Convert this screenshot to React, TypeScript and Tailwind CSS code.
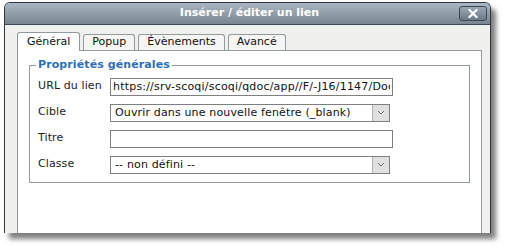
import React from 'react';

const FONT = { fontFamily: '"DejaVu Sans", Verdana, sans-serif' };

const TABS = [
  { label: 'Général', active: true },
  { label: 'Popup', active: false },
  { label: 'Évènements', active: false },
  { label: 'Avancé', active: false },
];

function Chevron() {
  return (
    <svg width="8" height="5" viewBox="0 0 8 5" className="block">
      <path d="M1 1 L4 4 L7 1" fill="none" stroke="#707070" strokeWidth="1" />
    </svg>
  );
}

function FakeSelect({ value }: { value: string }) {
  return (
    <div className="flex h-[18px] w-[280px] items-stretch border border-[#7f7f7f] bg-white">
      <div className="flex-1 overflow-hidden whitespace-nowrap pl-[4px] text-[11px] leading-[16px] tracking-[0.15px] text-[#111]">{value}</div>
      <div className="flex w-[17px] items-center justify-center border-l border-[#b0b0b0] bg-[#e0e0e0]">
        <Chevron />
      </div>
    </div>
  );
}

function Row({ label, children }: { label: string; children: React.ReactNode }) {
  return (
    <div className="flex h-[26px] items-center">
      <div className="w-[72px] text-[11px] tracking-[0.1px] text-[#222]">{label}</div>
      {children}
    </div>
  );
}

export default function App() {
  return (
    <div className="h-[247px] w-[508px] bg-white pl-[4px] pt-[2px]" style={FONT}>
      <div className="flex h-[231px] w-[487px] flex-col overflow-hidden rounded-t-[6px] border-x border-t border-[#2f3640] shadow-[5px_6px_5px_rgba(0,0,0,0.5)]">
        {/* Title bar */}
        <div className="relative flex h-[22px] items-center justify-center border-b border-[#3c4650] bg-gradient-to-b from-[#aab7c3] to-[#78868f]">
          <span className="pl-[4px] text-[11px] font-bold text-white">Insérer / éditer un lien</span>
          <div className="absolute right-[3px] top-[3px] flex h-[15px] w-[28px] items-center justify-center rounded-[3px] border border-[#3d4853] bg-gradient-to-b from-[#9aa8b5] to-[#6c7a86]">
            <svg width="10" height="9" viewBox="0 0 10 9">
              <path d="M1.5 1 L8.5 8 M8.5 1 L1.5 8" stroke="white" strokeWidth="2.2" strokeLinecap="square" />
            </svg>
          </div>
        </div>

        {/* Body */}
        <div className="flex flex-1 flex-col bg-[#f0f0ee] pl-[12px] pr-[8px] pt-[7px]">
          <div className="flex items-end gap-[3px]">
            {TABS.map((t) => (
              <div
                key={t.label}
                className={
                  t.active
                    ? 'relative z-10 -mb-px flex h-[19px] items-center rounded-t-[3px] border border-b-0 border-[#919b9c] bg-white px-[9px] text-[11px] text-[#111]'
                    : 'flex h-[16px] items-center rounded-t-[3px] border border-b-0 border-[#919b9c] bg-[#f5f5f3] px-[8px] text-[11px] text-[#111]'
                }
              >
                {t.label}
              </div>
            ))}
          </div>
          <div className="flex-1 border border-b-0 border-[#919b9c] bg-white px-[11px] pt-[6px]">
            <fieldset className="border border-[#919b9c] pb-[4px] pl-[8px] pr-[8px]">
              <legend className="ml-[-2px] px-[2px] text-[11px] font-bold tracking-[0.1px] text-[#2d6fbb]">Propriétés générales</legend>
              <Row label="URL du lien">
                <input
                  readOnly
                  value="https://srv-scoqi/scoqi/qdoc/app//F/-J16/1147/Document.pdf"
                  className="h-[18px] w-[283px] border border-[#7f7f7f] px-[2px] text-[11px] tracking-[0.2px] text-[#111] outline-none"
                  style={FONT}
                />
              </Row>
              <Row label="Cible">
                <FakeSelect value="Ouvrir dans une nouvelle fenêtre (_blank)" />
              </Row>
              <Row label="Titre">
                <input readOnly value="" className="h-[18px] w-[283px] border border-[#7f7f7f] px-[2px] text-[11px] outline-none" />
              </Row>
              <Row label="Classe">
                <FakeSelect value="-- non défini --" />
              </Row>
            </fieldset>
          </div>
        </div>
      </div>
    </div>
  );
}
